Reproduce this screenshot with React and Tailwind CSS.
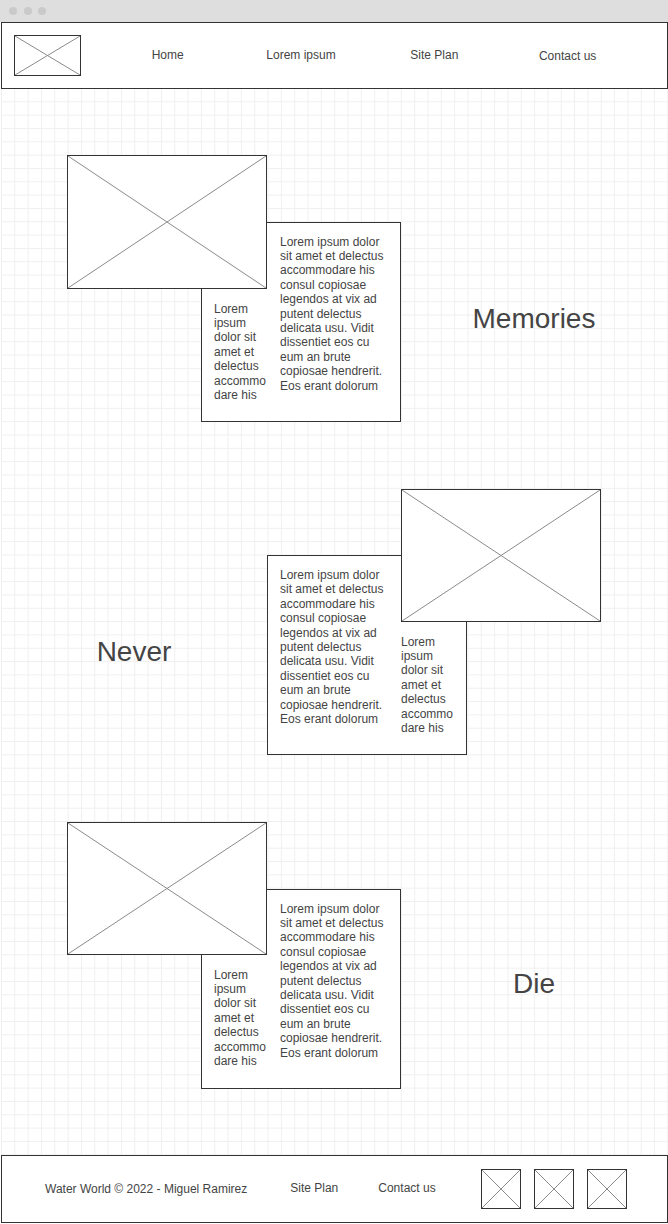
import React from 'react'

const BIG_TEXT =
  'Lorem ipsum dolor sit amet et delectus accommodare his consul copiosae legendos at vix ad putent delectus delicata usu. Vidit dissentiet eos cu eum an brute copiosae hendrerit. Eos erant dolorum'
const SMALL_TEXT = 'Lorem ipsum dolor sit amet et delectus accommodare his'

function Placeholder({ className = '' }) {
  return (
    <div className={`bg-white border border-[#333] ${className}`}>
      <svg className="block w-full h-full" viewBox="0 0 100 100" preserveAspectRatio="none">
        <line x1="0" y1="0" x2="100" y2="100" stroke="#8a8a8a" strokeWidth="1" vectorEffect="non-scaling-stroke" />
        <line x1="100" y1="0" x2="0" y2="100" stroke="#8a8a8a" strokeWidth="1" vectorEffect="non-scaling-stroke" />
      </svg>
    </div>
  )
}

function Header() {
  return (
    <header className="h-[67px] border border-[#333] bg-white flex items-center pl-[12px] text-[12px] text-[#444]">
      <Placeholder className="w-[67px] h-[41px]" />
      <nav className="flex ml-[20px]">
        <span className="w-[133.33px] text-center">Home</span>
        <span className="w-[133.33px] text-center">Lorem ipsum</span>
        <span className="w-[133.33px] text-center">Site Plan</span>
        <span className="w-[133.33px] text-center pt-px">Contact us</span>
      </nav>
    </header>
  )
}

function Footer() {
  return (
    <footer className="h-[68px] border border-[#333] bg-white flex items-center pl-[43px] text-[12px] text-[#444]">
      <span className="whitespace-nowrap">Water World © 2022 - Miguel Ramirez</span>
      <span className="ml-[43px] -mt-[2px] whitespace-nowrap">Site Plan</span>
      <span className="ml-[40px] -mt-[2px] whitespace-nowrap">Contact us</span>
      <div className="ml-[45px] flex gap-[13px]">
        <Placeholder className="w-10 h-10" />
        <Placeholder className="w-10 h-10" />
        <Placeholder className="w-10 h-10" />
      </div>
    </footer>
  )
}

export default function App() {
  return (
    <div className="w-[668px] min-h-[1224px] bg-white font-['Liberation_Sans',Arial,sans-serif]">
      <div className="h-[22px] bg-[#dedede] flex items-center pl-[9px] gap-[6.5px]">
        <span className="w-2 h-2 rounded-full bg-[#cacaca]" />
        <span className="w-2 h-2 rounded-full bg-[#cacaca]" />
        <span className="w-2 h-2 rounded-full bg-[#cacaca]" />
      </div>

      <div className="ml-px w-[667px]">
        <Header />

        <main className="grid grid-cols-[66px_67px_67px_66px_67px_67px_66px_67px_67px_67px] grid-rows-[66px_67px_67px_66px_67px_67px_66px_67px_67px_66px_67px_67px_66px_67px_67px_66px] text-[12px] leading-[14.4px] text-[#444] bg-[linear-gradient(to_right,#efefef_1px,transparent_1px),linear-gradient(to_bottom,#efefef_1px,transparent_1px)] bg-[size:13.333px_13.333px] bg-[position:0_-1px]">
          {/* Memories */}
          <div className="col-start-4 col-span-3 row-start-3 row-span-3 bg-white border border-[#333]" />
          <Placeholder className="col-start-2 col-span-3 row-start-2 row-span-2 z-10" />
          <p className="col-start-5 col-span-2 row-start-3 row-span-3 pl-[13px] pr-[13px] pt-[12.5px]">{BIG_TEXT}</p>
          <p className="col-start-4 row-start-4 row-span-2 pl-[13px] pt-[12.5px] break-words">{SMALL_TEXT}</p>
          <h2 className="col-start-8 col-span-2 row-start-4 pt-[16px] text-center text-[28px] leading-[28px]">Memories</h2>

          {/* Never */}
          <div className="col-start-5 col-span-3 row-start-8 row-span-3 bg-white border border-[#333]" />
          <Placeholder className="col-start-7 col-span-3 row-start-7 row-span-2 z-10" />
          <p className="col-start-5 col-span-2 row-start-8 row-span-3 pl-[13px] pr-[13px] pt-[13px]">{BIG_TEXT}</p>
          <p className="col-start-7 row-start-9 row-span-2 w-[54px] pt-[12.5px] break-words">{SMALL_TEXT}</p>
          <h2 className="col-start-2 col-span-2 row-start-9 pt-[16px] text-center text-[28px] leading-[28px]">Never</h2>

          {/* Die */}
          <div className="col-start-4 col-span-3 row-start-13 row-span-3 bg-white border border-[#333]" />
          <Placeholder className="col-start-2 col-span-3 row-start-12 row-span-2 z-10" />
          <p className="col-start-5 col-span-2 row-start-13 row-span-3 pl-[13px] pr-[13px] pt-[12.5px]">{BIG_TEXT}</p>
          <p className="col-start-4 row-start-14 row-span-2 pl-[13px] pt-[12.5px] break-words">{SMALL_TEXT}</p>
          <h2 className="col-start-8 col-span-2 row-start-14 pt-[15px] text-center text-[28px] leading-[28px]">Die</h2>
        </main>

        <Footer />
      </div>
    </div>
  )
}
